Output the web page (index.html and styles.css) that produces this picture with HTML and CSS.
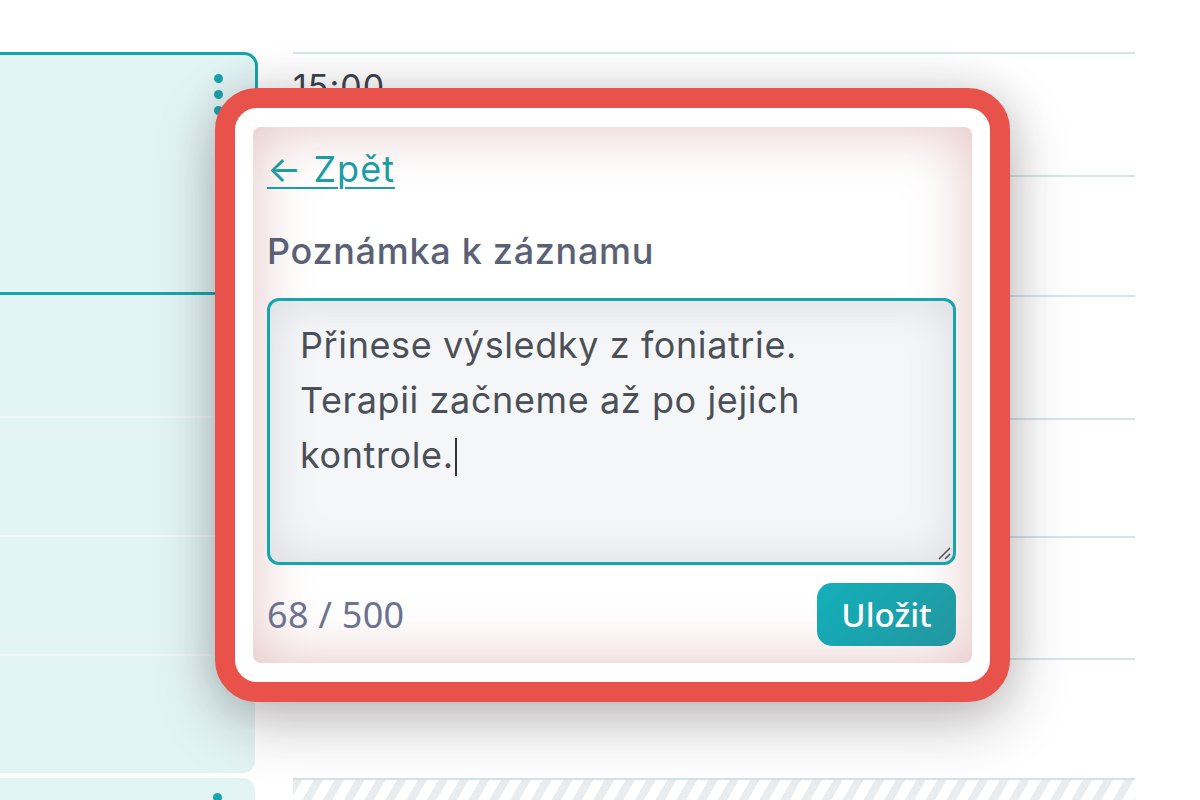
FILE: index.html
```html
<!DOCTYPE html>
<html lang="cs">
<head>
<meta charset="utf-8">
<title>Poznámka k záznamu</title>
<link rel="stylesheet" href="styles.css">
</head>
<body>
<div class="calendar">
  <div class="left-col">
    <div class="event selected">
      <div class="kebab"><span></span><span></span><span></span></div>
    </div>
    <div class="event block">
      <div class="slot"></div>
      <div class="slot"></div>
      <div class="slot"></div>
      <div class="slot"></div>
    </div>
    <div class="event next">
      <div class="kebab"><span></span><span></span><span></span></div>
    </div>
  </div>
  <div class="right-col">
    <div class="row"><span class="time">15:00</span></div>
    <div class="row"></div>
    <div class="row"></div>
    <div class="row"></div>
    <div class="row"></div>
    <div class="row"></div>
    <div class="row striped"><span class="time">16:00</span></div>
  </div>
</div>

<div class="highlight">
  <div class="panel">
    <a class="back" href="#">← Zpět</a>
    <div class="label">Poznámka k záznamu</div>
    <div class="note" role="textbox" aria-multiline="true">Přinese výsledky z foniatrie. Terapii začneme až po jejich kontrole.<span class="caret"></span>
      <svg class="grip" width="16" height="16" viewBox="0 0 16 16"><path d="M15 4 L4 15 M15 10 L10 15" stroke="#555" stroke-width="1.6" fill="none"/></svg>
    </div>
    <div class="footer">
      <span class="count">68 / 500</span>
      <button class="save">Uložit</button>
    </div>
  </div>
</div>
</body>
</html>
```

FILE: styles.css
```css
html, body {
  margin: 0;
  padding: 0;
}
body {
  width: 1200px;
  height: 800px;
  overflow: hidden;
  background: #ffffff;
  position: relative;
  font-family: "Inter", "Noto Sans", sans-serif;
}

.calendar {
  display: flex;
  gap: 35px;
  height: 800px;
}

.left-col {
  width: 278px;
  margin-left: -20px;
  padding-top: 52px;
  display: flex;
  flex-direction: column;
}
.event {
  box-sizing: border-box;
  background: #e3f4f5;
  flex-shrink: 0;
}
.event.selected {
  height: 243px;
  border: 3px solid #17a5ad;
  border-radius: 14px;
  display: flex;
  justify-content: flex-end;
  padding: 19px 32px 0 0;
}
.event.block {
  width: 275px;
  height: 478px;
  border-radius: 0 0 12px 12px;
  display: flex;
  flex-direction: column;
}
.slot {
  flex: 1;
  border-top: 2px solid #eef8f9;
}
.slot:first-child {
  border-top: none;
  flex: 0 0 121px;
}
.event.next {
  width: 275px;
  margin-top: 5px;
  height: 60px;
  border-radius: 12px 12px 0 0;
  display: flex;
  justify-content: flex-end;
  padding: 15px 33px 0 0;
}
.kebab {
  display: flex;
  flex-direction: column;
  gap: 7px;
}
.kebab span {
  width: 9px;
  height: 9px;
  border-radius: 50%;
  background: #17a5ad;
}

.right-col {
  width: 842px;
  padding-top: 52px;
  display: flex;
  flex-direction: column;
}
.row {
  flex-shrink: 0;
  height: 120px;
  border-top: 2px solid #d6e5e8;
  box-sizing: border-box;
  padding: 12px 0 0 0;
}
.row:nth-child(1) { height: 123px; }
.row:nth-child(3) { height: 123px; }
.row:nth-child(4) { height: 118px; }
.row:nth-child(5) { height: 122px; }
.time {
  font-size: 34px;
  color: #3d434b;
  letter-spacing: 1px;
}
.row.striped {
  height: 60px;
  border-top: 2px solid #d3e3e5;
  background: repeating-linear-gradient(120deg, #e9edf0 0 8px, #ffffff 8px 18px);
}

/* overlay popover with annotation ring */
.highlight {
  position: absolute;
  left: 215px;
  top: 88px;
  width: 795px;
  height: 614px;
  box-sizing: border-box;
  border: 20px solid #e8524a;
  border-radius: 42px;
  background: #ffffff;
  padding: 19px 18px;
  box-shadow: 0 20px 60px rgba(40, 30, 30, 0.28), 0 0 40px rgba(40, 30, 30, 0.12);
}
.panel {
  height: 100%;
  box-sizing: border-box;
  border-radius: 8px;
  background: #ffffff;
  box-shadow: inset 0 0 60px rgba(195, 120, 120, 0.45);
  padding: 20px 16px 17px 14px;
  display: flex;
  flex-direction: column;
}
.back {
  align-self: flex-start;
  color: #1c9ca5;
  font-size: 36px;
  font-weight: 400;
  letter-spacing: 1px;
  text-decoration: underline;
  text-decoration-thickness: 2px;
  text-underline-offset: 5px;
  line-height: 44px;
}
.label {
  margin-top: 38px;
  color: #5a6174;
  font-size: 36px;
  font-weight: 500;
  letter-spacing: 0.7px;
  line-height: 44px;
}
.note {
  position: relative;
  flex-shrink: 0;
  margin-top: 25px;
  height: 267px;
  box-sizing: border-box;
  border: 3px solid #17a5ad;
  border-radius: 12px;
  background: #f5f6f8;
  box-shadow: inset 0 0 45px rgba(110, 110, 120, 0.2);
  padding: 17px 60px 0 30px;
  color: #4b5058;
  font-size: 36px;
  letter-spacing: 0.6px;
  line-height: 55px;
}
.caret {
  display: inline-block;
  width: 2px;
  height: 38px;
  background: #333;
  vertical-align: -8px;
  margin-left: 1px;
}
.grip {
  position: absolute;
  right: 2px;
  bottom: 2px;
}
.footer {
  margin-top: 18px;
  display: flex;
  justify-content: space-between;
  align-items: center;
}
.count {
  font-family: "Noto Sans", sans-serif;
  font-size: 36px;
  letter-spacing: 0.3px;
  color: #6b7391;
}
.save {
  font-family: "Noto Sans", sans-serif;
  width: 139px;
  height: 63px;
  border: none;
  border-radius: 15px;
  background: linear-gradient(135deg, #12b0bb, #2396a0);
  color: #ffffff;
  font-size: 33px;
  font-weight: 500;
  padding: 0;
}
```
